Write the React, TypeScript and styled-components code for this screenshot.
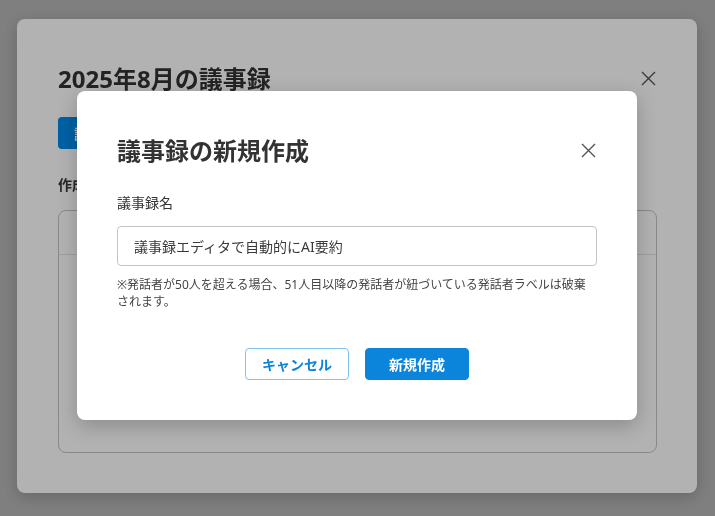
import styled, { createGlobalStyle } from 'styled-components';

const GlobalStyle = createGlobalStyle`
  html, body {
    margin: 0;
    padding: 0;
    background: #ffffff;
    font-family: "Noto Sans", "Noto Sans CJK JP", sans-serif;
  }
  * {
    box-sizing: border-box;
  }
`;

const Backdrop = styled.div<{ $alpha: number }>`
  position: fixed;
  inset: 0;
  display: flex;
  align-items: center;
  justify-content: center;
  padding: 0 1px 5px 0;
  background: rgba(0, 0, 0, ${(p) => p.$alpha});
`;

const OuterModal = styled.section`
  width: 680px;
  height: 474px;
  padding: 43px 40px 40px 41px;
  background: #ffffff;
  border-radius: 8px;
  box-shadow: 0 4px 16px rgba(0, 0, 0, 0.2);
  display: flex;
  flex-direction: column;
`;

const InnerModal = styled.section`
  width: 560px;
  padding: 43px 40px 40px 40px;
  background: #ffffff;
  border-radius: 8px;
  box-shadow: 0 6px 20px rgba(0, 0, 0, 0.22);
`;

const Header = styled.header`
  display: flex;
  align-items: center;
  justify-content: space-between;
`;

const Title = styled.h2`
  margin: 0;
  font-size: 24px;
  line-height: 1.4;
  font-weight: 700;
  color: #333333;
`;

const CloseButton = styled.button`
  width: 15px;
  height: 15px;
  margin-right: 1px;
  padding: 0;
  border: none;
  background: transparent;
  display: flex;
  align-items: center;
  justify-content: center;
  cursor: pointer;
  svg {
    display: block;
  }
`;

const PrimaryWide = styled.button`
  align-self: flex-start;
  margin-top: 22px;
  height: 32px;
  padding: 0 16px;
  border: none;
  border-radius: 4px;
  background: #008ced;
  color: #ffffff;
  font-family: inherit;
  font-size: 14px;
  font-weight: 700;
`;

const SectionLabel = styled.div`
  margin-top: 26px;
  font-size: 14px;
  line-height: 20px;
  font-weight: 700;
  color: #3a3a3a;
`;

const ListBox = styled.div`
  margin-top: 15px;
  flex: 1;
  border: 1px solid #c5c5c5;
  border-radius: 8px;
`;

const ListHead = styled.div`
  height: 44px;
  border-bottom: 1px solid #e3e3e3;
`;

const FieldLabel = styled.label`
  display: block;
  margin-top: 25px;
  font-size: 14px;
  line-height: 21px;
  color: #333333;
`;

const TextInput = styled.input`
  display: block;
  width: 100%;
  height: 40px;
  margin-top: 13px;
  padding: 0 16px;
  border: 1px solid #c4c4c4;
  border-radius: 4px;
  font-family: inherit;
  font-size: 14px;
  color: #3a3a3a;
  outline: none;
`;

const Note = styled.p`
  margin: 10px 0 0 0;
  font-size: 12px;
  line-height: 17px;
  color: #444444;
`;

const Actions = styled.div`
  margin-top: 38px;
  display: flex;
  justify-content: center;
  gap: 16px;
`;

const ActionButton = styled.button<{ $primary?: boolean }>`
  width: 104px;
  height: 32px;
  padding: 0;
  border-radius: 4px;
  font-family: inherit;
  font-size: 14px;
  font-weight: 700;
  cursor: pointer;
  border: 1px solid ${(p) => (p.$primary ? '#0b84dc' : '#7fc1ef')};
  background: ${(p) => (p.$primary ? '#0b84dc' : '#ffffff')};
  color: ${(p) => (p.$primary ? '#ffffff' : '#0b84dc')};
`;

const CloseIcon = () => (
  <svg width="15" height="15" viewBox="0 0 15 15">
    <path d="M1 1 L14 14 M14 1 L1 14" stroke="#555555" strokeWidth="1.4" fill="none" />
  </svg>
);

export default function App() {
  return (
    <>
      <GlobalStyle />
      <Backdrop $alpha={0.29}>
        <OuterModal>
          <Header>
            <Title>2025年8月の議事録</Title>
            <CloseButton aria-label="閉じる">
              <CloseIcon />
            </CloseButton>
          </Header>
          <PrimaryWide>議事録を新規作成</PrimaryWide>
          <SectionLabel>作成済みの議事録</SectionLabel>
          <ListBox>
            <ListHead />
          </ListBox>
        </OuterModal>
      </Backdrop>
      <Backdrop $alpha={0.3}>
        <InnerModal>
          <Header>
            <Title>議事録の新規作成</Title>
            <CloseButton aria-label="閉じる">
              <CloseIcon />
            </CloseButton>
          </Header>
          <FieldLabel htmlFor="minutes-name">議事録名</FieldLabel>
          <TextInput id="minutes-name" defaultValue="議事録エディタで自動的にAI要約" />
          <Note>
            ※発話者が50人を超える場合、51人目以降の発話者が紐づいている発話者ラベルは破棄されます。
          </Note>
          <Actions>
            <ActionButton>キャンセル</ActionButton>
            <ActionButton $primary>新規作成</ActionButton>
          </Actions>
        </InnerModal>
      </Backdrop>
    </>
  );
}
